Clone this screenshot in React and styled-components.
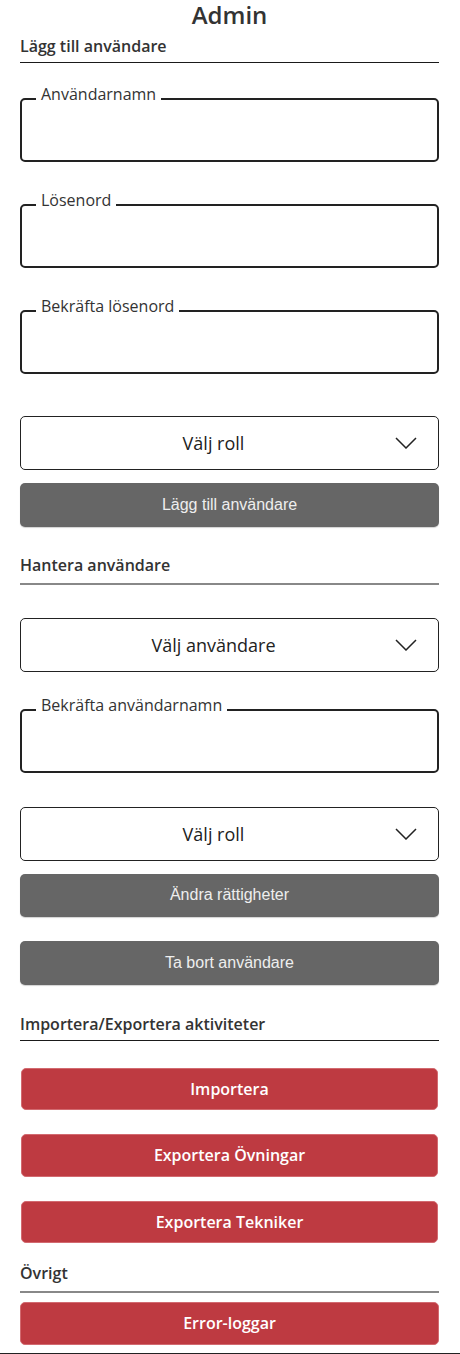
import React from "react";
import styled, { createGlobalStyle } from "styled-components";

const Global = createGlobalStyle`
  html, body { margin: 0; padding: 0; background: #fff; }
  body { font-family: "Open Sans", "Liberation Sans", sans-serif; color: #333; }
  * { box-sizing: border-box; }
`;

const Page = styled.div`
  display: flex;
  flex-direction: column;
  padding: 0 21px 0 20px;
`;

const Title = styled.h1`
  margin: 0;
  font-size: 24px;
  line-height: 30px;
  font-weight: 600;
  text-align: center;
  color: #333;
`;

const SectionHeading = styled.h2`
  margin: ${(p) => p.$mt}px 0 0;
  font-size: 16px;
  line-height: 22px;
  font-weight: 600;
  color: #333;
  padding-bottom: ${(p) => (p.$soft ? 7 : 5)}px;
  border-bottom: ${(p) => (p.$soft ? "2px solid #888" : "1px solid #1a1a1a")};
`;

const Field = styled.fieldset`
  margin: ${(p) => p.$mt}px 0 0;
  padding: 0 14px;
  border: 2px solid #222;
  border-radius: 5px;
  min-width: 0;
`;

const Legend = styled.legend`
  padding: 0 5px 10px;
  font-size: 16px;
  line-height: 22px;
  color: #333;
`;

const TextInput = styled.input`
  display: block;
  width: 100%;
  height: 45px;
  border: none;
  outline: none;
  background: transparent;
  font-family: inherit;
  font-size: 16px;
`;

const Select = styled.div`
  margin-top: ${(p) => p.$mt}px;
  height: 54px;
  display: flex;
  align-items: center;
  padding: 0 21px 0 11px;
  border: 1px solid #222;
  border-radius: 5px;
  background: #fff;
`;

const SelectText = styled.span`
  flex: 1;
  text-align: center;
  font-size: 18px;
  color: #222;
`;

const Chevron = styled.svg`
  width: 22px;
  height: 12px;
  flex: none;
`;

const GrayButton = styled.button`
  margin-top: ${(p) => p.$mt}px;
  height: 43.5px;
  border: none;
  border-radius: 5px;
  background: #666;
  color: #eee;
  font-family: "Liberation Sans", Arial, sans-serif;
  font-size: 16px;
  box-shadow: 0 1px 1px rgba(0, 0, 0, 0.18);
  display: flex;
  align-items: center;
  justify-content: center;
`;

const RedButton = styled.button`
  margin: ${(p) => p.$mt}px ${(p) => (p.$inset ? 1 : 0)}px 0;
  height: 42.5px;
  border: 1px solid #d26a70;
  border-radius: 5px;
  background: #be3a41;
  color: #fff;
  font-family: "Open Sans", sans-serif;
  font-weight: 600;
  font-size: 16px;
  display: flex;
  align-items: center;
  justify-content: center;
`;

const BottomBar = styled.div`
  margin-top: 8px;
  height: 48px;
  background: #222;
`;

function Dropdown({ label, mt }) {
  return (
    <Select $mt={mt}>
      <SelectText>{label}</SelectText>
      <Chevron viewBox="0 0 22 12">
        <polyline points="1,1 11,11 21,1" fill="none" stroke="#222" strokeWidth="1.5" />
      </Chevron>
    </Select>
  );
}

function TextField({ label, mt, type = "text" }) {
  return (
    <Field $mt={mt}>
      <Legend>{label}</Legend>
      <TextInput type={type} />
    </Field>
  );
}

export default function App() {
  return (
    <>
      <Global />
      <Page>
        <Title>Admin</Title>
        <SectionHeading $mt={5}>Lägg till användare</SectionHeading>
        <TextField label="Användarnamn" mt={20} />
        <TextField label="Lösenord" mt={27} type="password" />
        <TextField label="Bekräfta lösenord" mt={27} type="password" />
        <Dropdown label="Välj roll" mt={42} />
        <GrayButton $mt={13}>Lägg till användare</GrayButton>

        <SectionHeading $mt={27} $soft>Hantera användare</SectionHeading>
        <Dropdown label="Välj användare" mt={33} />
        <TextField label="Bekräfta användarnamn" mt={22} />
        <Dropdown label="Välj roll" mt={34} />
        <GrayButton $mt={13}>Ändra rättigheter</GrayButton>
        <GrayButton $mt={24}>Ta bort användare</GrayButton>

        <SectionHeading $mt={28}>Importera/Exportera aktiviteter</SectionHeading>
        <RedButton $mt={27} $inset>Importera</RedButton>
        <RedButton $mt={24} $inset>Exportera Övningar</RedButton>
        <RedButton $mt={24} $inset>Exportera Tekniker</RedButton>

        <SectionHeading $mt={19} $soft>Övrigt</SectionHeading>
        <RedButton $mt={9}>Error-loggar</RedButton>
      </Page>
      <BottomBar />
    </>
  );
}
